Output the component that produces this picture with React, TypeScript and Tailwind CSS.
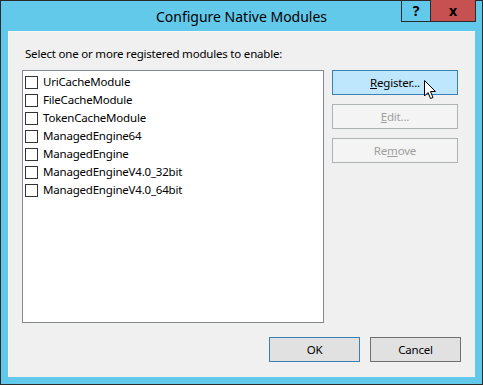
const modules = [
  'UriCacheModule',
  'FileCacheModule',
  'TokenCacheModule',
  'ManagedEngine64',
  'ManagedEngine',
  'ManagedEngineV4.0_32bit',
  'ManagedEngineV4.0_64bit',
]

const font = { fontFamily: '"Noto Sans", "Liberation Sans", sans-serif' }

const Cursor = () => (
  <svg className="absolute left-[423px] top-[79px]" width="13" height="20" viewBox="0 0 13 20">
    <path d="M0.5 0.5 L0.5 16 L4 12.5 L6.5 18.5 L9 17.5 L6.5 11.5 L11.5 11.5 Z" fill="#fff" stroke="#000" strokeWidth="1" strokeLinejoin="miter" />
  </svg>
)

const SideButton = ({ label, disabled, active }: { label: React.ReactNode; disabled?: boolean; active?: boolean }) => (
  <div
    className={
      'h-[25px] w-[126px] flex items-center justify-center text-[11.5px] tracking-[-0.2px] border ' +
      (active
        ? 'bg-[#bee6fd] border-[#3c7fb1] text-black'
        : disabled
          ? 'bg-[#f4f4f4] border-[#adb2b5] text-[#a0a0a0]'
          : 'bg-[#e1e1e1] border-[#707070] text-black')
    }
  >
    {label}
  </div>
)

export default function App() {
  return (
    <div className="relative w-[483px] h-[385px] bg-[#63c9ea] border border-[#2b2b2b] flex flex-col" style={font}>
      <div className="relative h-[30px] flex items-center justify-center">
        <span className="text-[14px] text-black">Configure Native Modules</span>
        <div className="absolute right-[6px] -top-px flex">
          <div className="w-[29px] h-[22px] border border-[#2b2b2b] border-r-0 border-t-0 flex items-center justify-center text-[14px] font-bold text-black">?</div>
          <div className="w-[46px] h-[22px] bg-[#c75050] border border-[#2b2b2b] border-t-0 flex items-center justify-center text-[14px] font-bold text-black">x</div>
        </div>
      </div>
      <div className="mx-[7px] mb-[7px] flex-1 bg-[#f0f0f0] border-l border-t border-[#f8f8f8] flex flex-col text-[11.5px] tracking-[-0.2px] text-black">
        <div className="pl-[16px] pt-[13px] h-[38px]">Select one or more registered modules to enable:</div>
        <div className="flex pl-[13px] gap-[8px]">
          <div className="w-[302px] h-[253px] bg-white border border-[#828790] pt-[2px] pl-[2px]">
            {modules.map((m) => (
              <div key={m} className="h-[18px] flex items-center gap-[5px]">
                <div className="w-[13px] h-[13px] border border-[#333] bg-white" />
                <span>{m}</span>
              </div>
            ))}
          </div>
          <div className="flex flex-col gap-[9px]">
            <SideButton active label={<span><u>R</u>egister...</span>} />
            <SideButton disabled label={<span><u>E</u>dit...</span>} />
            <SideButton disabled label={<span>Re<u>m</u>ove</span>} />
          </div>
        </div>
        <div className="flex justify-end gap-[10px] pr-[14px] mt-[14px]">
          <div className="w-[91px] h-[25px] flex items-center justify-center bg-[#e1e1e1] border border-[#3c7fb1]">OK</div>
          <div className="w-[91px] h-[25px] flex items-center justify-center bg-[#e1e1e1] border border-[#707070]">Cancel</div>
        </div>
      </div>
      <Cursor />
    </div>
  )
}
